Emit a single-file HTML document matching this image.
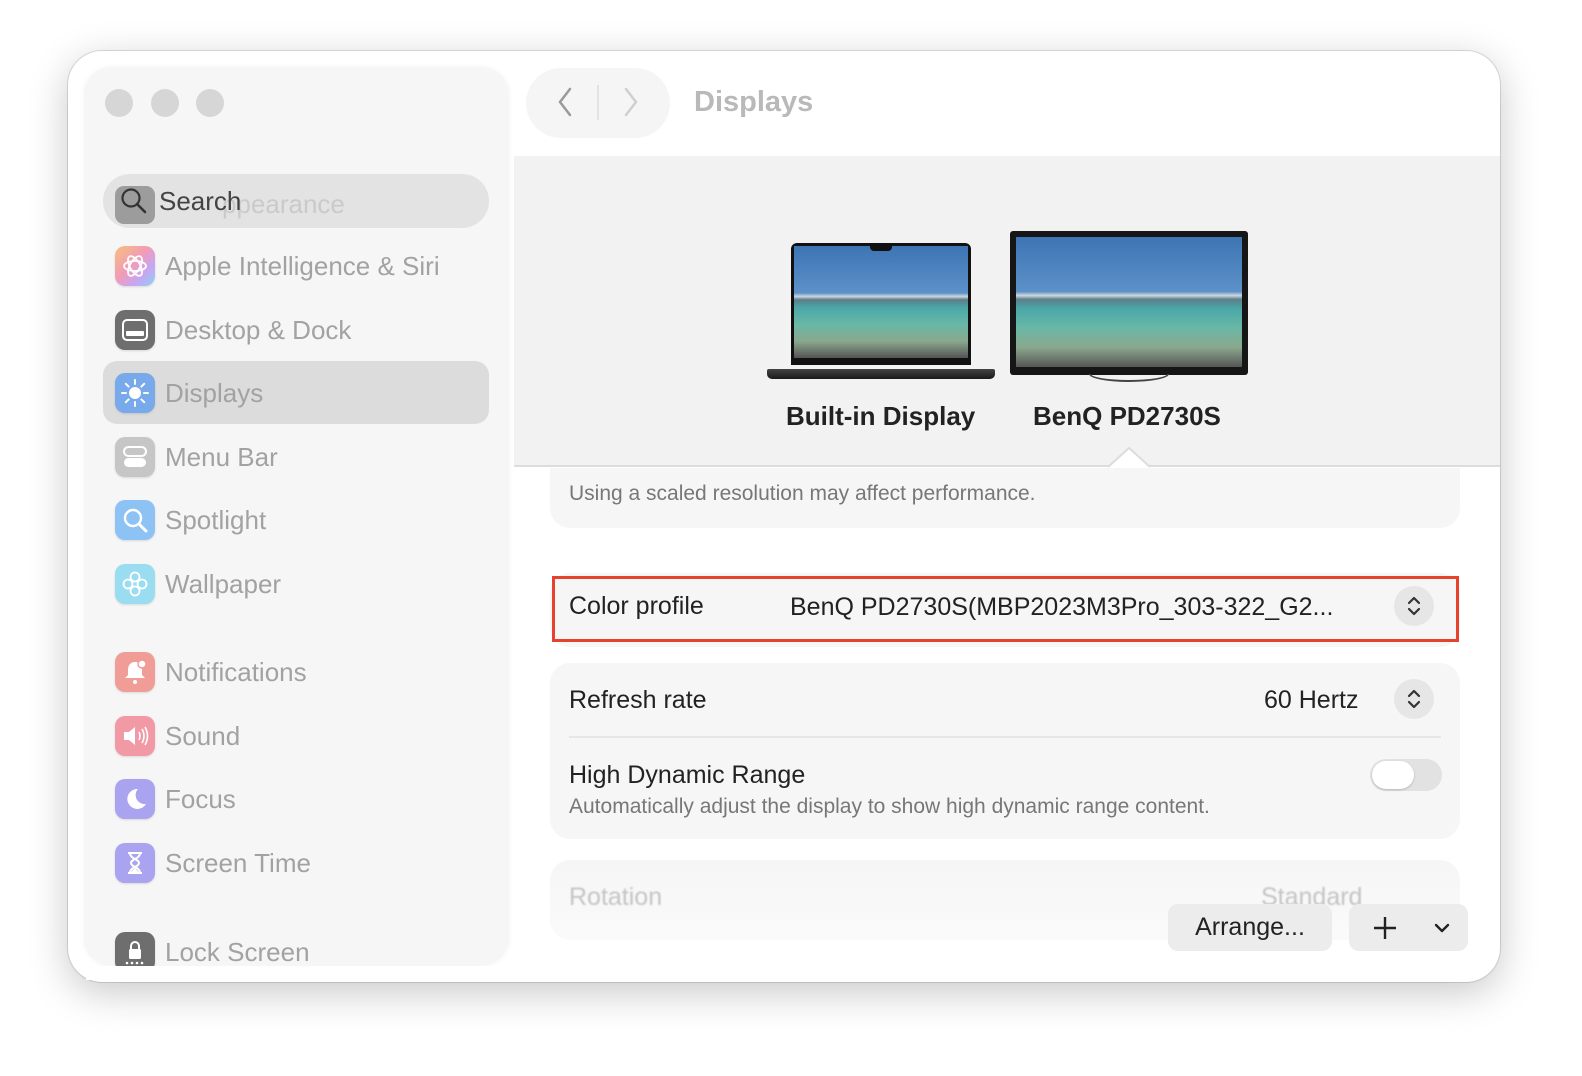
<!DOCTYPE html>
<html><head><meta charset="utf-8"><style>
*{margin:0;padding:0;box-sizing:border-box}
body{width:1582px;height:1076px;background:#fff;font-family:"Liberation Sans",sans-serif;position:relative;overflow:hidden}
.a{position:absolute}
.win{left:68px;top:51px;width:1432px;height:931px;border-radius:34px;background:#fff;box-shadow:0 10px 40px rgba(0,0,0,.22),0 0 0 1px rgba(0,0,0,.12);overflow:hidden}
.side{left:84px;top:67px;width:425px;height:899px;border-radius:28px;background:#f6f6f6;box-shadow:0 0 6px rgba(0,0,0,.05)}
.dot{width:28px;height:28px;border-radius:50%;background:#d6d6d6;top:89px}
.item{left:115px;height:40px;display:flex;align-items:center;font-size:26px;color:#a2a2a2}
.ic{width:40px;height:40px;border-radius:10px;margin-right:10px;display:flex;align-items:center;justify-content:center;box-shadow:0 1px 2px rgba(0,0,0,.12)}
.card{background:#f6f6f6;border-radius:20px}
.t{font-size:25px;color:#222}
.step{width:40px;height:40px;border-radius:50%;background:#e6e6e6;display:flex;align-items:center;justify-content:center}
.screen{background:linear-gradient(#3d74b3 0%,#5c91c9 42%,#cfd8e0 45%,#5d7e8a 48%,#4aa7a8 55%,#69b8a6 70%,#8aa88d 85%,#555 100%)}
</style></head><body>
<div class="a win"></div>
<div class="a" style="left:514px;top:156px;width:986px;height:311px;background:#f2f2f2;border-bottom:2px solid #dcdcdc"></div>
<div class="a" style="left:526px;top:68px;width:144px;height:70px;border-radius:35px;background:#f5f5f5"></div>
<svg class="a" style="left:540px;top:80px" width="120" height="46"><path d="M30 9 L20 22 L30 35" stroke="#9a9a9a" stroke-width="2.5" fill="none" stroke-linecap="round"/><line x1="58" y1="5" x2="58" y2="40" stroke="#e2e2e2" stroke-width="2"/><path d="M86 9 L96 22 L86 35" stroke="#cfcfcf" stroke-width="2.5" fill="none" stroke-linecap="round"/></svg>
<div class="a" style="left:694px;top:86px;font-size:29px;font-weight:bold;color:#b9b9b9">Displays</div>

<div class="a" style="left:791px;top:243px;width:180px;height:122px;background:#111;border-radius:6px 6px 0 0;padding:3px 3px 7px"><div class="screen" style="width:100%;height:100%"></div></div>
<div class="a" style="left:870px;top:245px;width:22px;height:6px;background:#111;border-radius:0 0 4px 4px"></div>
<div class="a" style="left:767px;top:369px;width:228px;height:10px;background:linear-gradient(#444,#1a1a1a);border-radius:2px 2px 5px 5px"></div>
<div class="a" style="left:1010px;top:231px;width:238px;height:144px;background:#161616;border-radius:3px;padding:6px 6px 8px"><div class="screen" style="width:100%;height:100%"></div></div>
<div class="a" style="left:1089px;top:374px;width:80px;height:8px;border:2px solid #444;border-top:none;border-radius:0 0 40px 40px/0 0 8px 8px"></div>
<div class="a" style="left:786px;top:401px;font-size:26px;font-weight:bold;color:#222">Built-in Display</div>
<div class="a" style="left:1033px;top:401px;font-size:26px;font-weight:bold;color:#222">BenQ PD2730S</div>
<svg class="a" style="left:1108px;top:446px" width="42" height="22"><path d="M0 21 L21 2 L42 21" fill="#fff" stroke="#dcdcdc" stroke-width="2"/></svg>

<div class="a card" style="left:550px;top:468px;width:910px;height:60px;border-radius:0 0 20px 20px"></div>
<div class="a" style="left:569px;top:482px;font-size:21px;color:#777">Using a scaled resolution may affect performance.</div>

<div class="a card" style="left:550px;top:573px;width:910px;height:74px"></div>
<div class="a" style="left:552px;top:576px;width:907px;height:66px;border:3px solid #e5432d"></div>
<div class="a t" style="left:569px;top:592px">Color profile</div>
<div class="a t" style="left:790px;top:593px">BenQ PD2730S(MBP2023M3Pro_303-322_G2...</div>
<div class="a step" style="left:1394px;top:586px"><svg width="16" height="24"><path d="M3 9 L8 4 L13 9 M3 15 L8 20 L13 15" stroke="#333" stroke-width="2.2" fill="none" stroke-linecap="round" stroke-linejoin="round"/></svg></div>

<div class="a card" style="left:550px;top:663px;width:910px;height:176px"></div>
<div class="a t" style="left:569px;top:686px">Refresh rate</div>
<div class="a t" style="left:1264px;top:686px">60 Hertz</div>
<div class="a step" style="left:1394px;top:679px"><svg width="16" height="24"><path d="M3 9 L8 4 L13 9 M3 15 L8 20 L13 15" stroke="#333" stroke-width="2.2" fill="none" stroke-linecap="round" stroke-linejoin="round"/></svg></div>
<div class="a" style="left:569px;top:736px;width:872px;height:2px;background:#e6e6e6"></div>
<div class="a t" style="left:569px;top:761px">High Dynamic Range</div>
<div class="a" style="left:569px;top:795px;font-size:21px;color:#777">Automatically adjust the display to show high dynamic range content.</div>
<div class="a" style="left:1370px;top:759px;width:72px;height:32px;border-radius:16px;background:#e2e2e2"><div style="position:absolute;left:2px;top:2px;width:42px;height:28px;border-radius:14px;background:#fff;box-shadow:0 1px 2px rgba(0,0,0,.2)"></div></div>

<div class="a card" style="left:550px;top:860px;width:910px;height:80px;background:linear-gradient(#f6f6f6,#fafafa)"></div>
<div class="a" style="left:569px;top:883px;font-size:25px;color:#c4c4c4;filter:blur(.8px)">Rotation</div>
<div class="a" style="left:1261px;top:883px;font-size:25px;color:#c4c4c4;filter:blur(.8px)">Standard</div>
<div class="a" style="left:1168px;top:904px;width:164px;height:47px;border-radius:10px;background:#ececec;font-size:25px;color:#222;text-align:center;line-height:47px">Arrange...</div>
<div class="a" style="left:1349px;top:904px;width:119px;height:47px;border-radius:10px;background:#ececec"></div>
<svg class="a" style="left:1372px;top:914px" width="90" height="28"><path d="M13 3 V25 M2 14 H24" stroke="#222" stroke-width="2.4"/><path d="M64 11 L70 17 L76 11" stroke="#222" stroke-width="2.4" fill="none" stroke-linecap="round" stroke-linejoin="round"/></svg>

<div class="a side"></div>
<div class="a dot" style="left:105px"></div><div class="a dot" style="left:151px"></div><div class="a dot" style="left:196px"></div>
<div class="a" style="left:103px;top:174px;width:386px;height:54px;border-radius:27px;background:#e3e3e3"></div>
<div class="a" style="left:222px;top:189px;font-size:26px;color:#cacaca">ppearance</div>
<div class="a" style="left:115px;top:186px;width:40px;height:38px;border-radius:9px;background:#555;opacity:.5"></div>
<svg class="a" style="left:119px;top:186px" width="30" height="30"><circle cx="12" cy="12" r="8.5" stroke="#333" stroke-width="2.2" fill="none"/><path d="M18 18 L26 26" stroke="#333" stroke-width="2.6" stroke-linecap="round"/></svg>
<div class="a" style="left:159px;top:186px;font-size:26px;color:#444;background:transparent">Search</div>

<div class="a item" style="top:246px"><div class="ic" style="background:linear-gradient(135deg,#f5c07a,#f29bb8 45%,#c9a5f0 70%,#8ed0f5)"><svg width="28" height="28"><g fill="none" stroke="#fff" stroke-width="1.8"><ellipse cx="14" cy="14" rx="11" ry="5"/><ellipse cx="14" cy="14" rx="11" ry="5" transform="rotate(60 14 14)"/><ellipse cx="14" cy="14" rx="11" ry="5" transform="rotate(120 14 14)"/></g></svg></div>Apple Intelligence &amp; Siri</div>
<div class="a item" style="top:310px"><div class="ic" style="background:#6e6e6e"><svg width="28" height="24"><rect x="2" y="2" width="24" height="20" rx="4" fill="none" stroke="#fff" stroke-width="2"/><rect x="5" y="13" width="18" height="5" rx="1" fill="#fff"/></svg></div>Desktop &amp; Dock</div>
<div class="a" style="left:103px;top:361px;width:386px;height:63px;border-radius:14px;background:#dcdcdc"></div>
<div class="a item" style="top:373px"><div class="ic" style="background:#78a9ea"><svg width="30" height="30"><circle cx="15" cy="15" r="6" fill="#fff"/><g stroke="#fff" stroke-width="2" stroke-linecap="round"><path d="M15 2v4M15 24v4M2 15h4M24 15h4M5.8 5.8l2.8 2.8M21.4 21.4l2.8 2.8M5.8 24.2l2.8-2.8M21.4 8.6l2.8-2.8"/></g></svg></div>Displays</div>
<div class="a item" style="top:437px"><div class="ic" style="background:#c6c6c6"><svg width="28" height="28"><rect x="3" y="4" width="22" height="9" rx="4.5" fill="none" stroke="#fff" stroke-width="2"/><rect x="3" y="15" width="22" height="9" rx="4.5" fill="#fff"/></svg></div>Menu Bar</div>
<div class="a item" style="top:500px"><div class="ic" style="background:#8cc2f4"><svg width="28" height="28"><circle cx="12" cy="12" r="8" stroke="#fff" stroke-width="2.4" fill="none"/><path d="M18 18 L25 25" stroke="#fff" stroke-width="3" stroke-linecap="round"/></svg></div>Spotlight</div>
<div class="a item" style="top:564px"><div class="ic" style="background:#9adcf0"><svg width="28" height="28"><g fill="none" stroke="#fff" stroke-width="1.8"><circle cx="14" cy="7" r="4.5"/><circle cx="14" cy="21" r="4.5"/><circle cx="7" cy="14" r="4.5"/><circle cx="21" cy="14" r="4.5"/></g></svg></div>Wallpaper</div>
<div class="a item" style="top:652px"><div class="ic" style="background:#f09d98"><svg width="28" height="28"><path d="M14 4c-5 0-7 4-7 8v5l-3 3h20l-3-3v-5c0-4-2-8-7-8z" fill="#fff"/><circle cx="14" cy="24" r="2" fill="#fff"/><circle cx="21" cy="6" r="4" fill="#fff" stroke="#f09d98" stroke-width="1.5"/></svg></div>Notifications</div>
<div class="a item" style="top:716px"><div class="ic" style="background:#f19aa6"><svg width="30" height="28"><path d="M4 10h5l6-5v18l-6-5H4z" fill="#fff"/><path d="M19 10q2 4 0 8M22 7q4 7 0 14M25 5q5 9 0 18" stroke="#fff" stroke-width="1.6" fill="none"/></svg></div>Sound</div>
<div class="a item" style="top:779px"><div class="ic" style="background:#aaa3f0"><svg width="28" height="28"><path d="M17 4a10 10 0 1 0 8 15A9 9 0 0 1 17 4z" fill="#fff"/></svg></div>Focus</div>
<div class="a item" style="top:843px"><div class="ic" style="background:#aaa3f0"><svg width="28" height="28"><path d="M7 4h14M7 24h14M9 4c0 6 9 6 9 10s-9 4-9 10M19 4c0 6-9 6-9 10s9 4 9 10" stroke="#fff" stroke-width="2" fill="none"/><path d="M10 23l4-4 4 4z" fill="#fff"/></svg></div>Screen Time</div>
<div class="a item" style="top:932px"><div class="ic" style="background:#6e6e6e"><svg width="28" height="28"><rect x="8" y="11" width="12" height="10" rx="1.5" fill="#fff"/><path d="M10 11V8a4 4 0 0 1 8 0v3" stroke="#fff" stroke-width="2" fill="none"/><g fill="#fff"><circle cx="6" cy="25" r="1.3"/><circle cx="11" cy="25" r="1.3"/><circle cx="16" cy="25" r="1.3"/><circle cx="21" cy="25" r="1.3"/></g></svg></div>Lock Screen</div>
<div class="a" style="left:86px;top:966px;width:421px;height:14px;background:#fff"></div>
</body></html>
